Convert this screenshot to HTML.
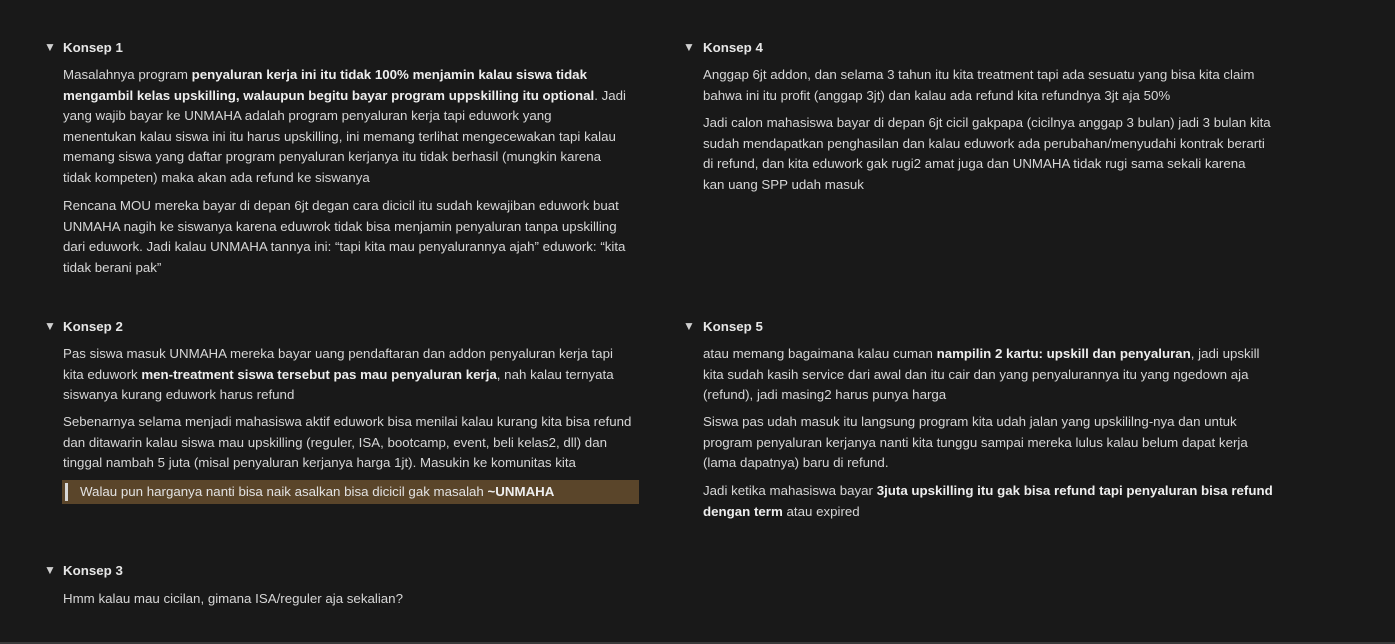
<!DOCTYPE html>
<html><head><meta charset="utf-8"><style>
html,body{margin:0;padding:0;background:#191919;width:1395px;height:644px;overflow:hidden;position:relative}
body{font-family:"Liberation Sans","DejaVu Sans",sans-serif;font-size:13.3px;color:#d6d6d6}
.h{position:absolute;font-weight:bold;color:#e6e6e6;font-size:13.3px;line-height:20px}
.t{position:absolute;font-size:12px;color:#d0d0d0;line-height:20px}
.b{position:absolute;line-height:20.6px;white-space:nowrap;overflow:hidden}
b{color:#eeeeee}
.q{position:absolute;left:62px;top:480px;width:577px;height:24px;background:#5a452a;}
.q:before{content:"";position:absolute;left:3px;top:3px;width:3px;height:18px;background:#d8d8d8}
.q span{position:absolute;left:18px;top:2px;line-height:20px;color:#e2e2e2}
.bot{position:absolute;left:0;top:642px;width:1395px;height:2px;background:#3a3a3a}
</style></head><body>
<div class="t" style="left:44px;top:37px">▼</div><div class="h" style="left:63px;top:38px">Konsep 1</div>
<div class="b" style="left:63px;top:65px;width:590px">Masalahnya program <b>penyaluran kerja ini itu tidak 100% menjamin kalau siswa tidak</b><br><b>mengambil kelas upskilling, walaupun begitu bayar program uppskilling itu optional</b>. Jadi<br>yang wajib bayar ke UNMAHA adalah program penyaluran kerja tapi eduwork yang<br>menentukan kalau siswa ini itu harus upskilling, ini memang terlihat mengecewakan tapi kalau<br>memang siswa yang daftar program penyaluran kerjanya itu tidak berhasil (mungkin karena<br>tidak kompeten) maka akan ada refund ke siswanya</div>
<div class="b" style="left:63px;top:196px;width:590px">Rencana MOU mereka bayar di depan 6jt degan cara dicicil itu sudah kewajiban eduwork buat<br>UNMAHA nagih ke siswanya karena eduwrok tidak bisa menjamin penyaluran tanpa upskilling<br>dari eduwork. Jadi kalau UNMAHA tannya ini: “tapi kita mau penyalurannya ajah” eduwork: “kita<br>tidak berani pak”</div>

<div class="t" style="left:44px;top:316px">▼</div><div class="h" style="left:63px;top:317px">Konsep 2</div>
<div class="b" style="left:63px;top:344px;width:590px">Pas siswa masuk UNMAHA mereka bayar uang pendaftaran dan addon penyaluran kerja tapi<br>kita eduwork <b>men-treatment siswa tersebut pas mau penyaluran kerja</b>, nah kalau ternyata<br>siswanya kurang eduwork harus refund</div>
<div class="b" style="left:63px;top:412px;width:590px">Sebenarnya selama menjadi mahasiswa aktif eduwork bisa menilai kalau kurang kita bisa refund<br>dan ditawarin kalau siswa mau upskilling (reguler, ISA, bootcamp, event, beli kelas2, dll) dan<br>tinggal nambah 5 juta (misal penyaluran kerjanya harga 1jt). Masukin ke komunitas kita</div>
<div class="q"><span>Walau pun harganya nanti bisa naik asalkan bisa dicicil gak masalah <b>~UNMAHA</b></span></div>

<div class="t" style="left:44px;top:560px">▼</div><div class="h" style="left:63px;top:561px">Konsep 3</div>
<div class="b" style="left:63px;top:589px;width:590px">Hmm kalau mau cicilan, gimana ISA/reguler aja sekalian?</div>

<div class="t" style="left:683px;top:37px">▼</div><div class="h" style="left:703px;top:38px">Konsep 4</div>
<div class="b" style="left:703px;top:65px;width:576px">Anggap 6jt addon, dan selama 3 tahun itu kita treatment tapi ada sesuatu yang bisa kita claim<br>bahwa ini itu profit (anggap 3jt) dan kalau ada refund kita refundnya 3jt aja 50%</div>
<div class="b" style="left:703px;top:113px;width:576px">Jadi calon mahasiswa bayar di depan 6jt cicil gakpapa (cicilnya anggap 3 bulan) jadi 3 bulan kita<br>sudah mendapatkan penghasilan dan kalau eduwork ada perubahan/menyudahi kontrak berarti<br>di refund, dan kita eduwork gak rugi2 amat juga dan UNMAHA tidak rugi sama sekali karena<br>kan uang SPP udah masuk</div>

<div class="t" style="left:683px;top:316px">▼</div><div class="h" style="left:703px;top:317px">Konsep 5</div>
<div class="b" style="left:703px;top:344px;width:576px">atau memang bagaimana kalau cuman <b>nampilin 2 kartu: upskill dan penyaluran</b>, jadi upskill<br>kita sudah kasih service dari awal dan itu cair dan yang penyalurannya itu yang ngedown aja<br>(refund), jadi masing2 harus punya harga</div>
<div class="b" style="left:703px;top:412px;width:576px">Siswa pas udah masuk itu langsung program kita udah jalan yang upskililng-nya dan untuk<br>program penyaluran kerjanya nanti kita tunggu sampai mereka lulus kalau belum dapat kerja<br>(lama dapatnya) baru di refund.</div>
<div class="b" style="left:703px;top:481px;width:576px">Jadi ketika mahasiswa bayar <b>3juta upskilling itu gak bisa refund tapi penyaluran bisa refund</b><br><b>dengan term</b> atau expired</div>
<div class="bot"></div>
</body></html>
